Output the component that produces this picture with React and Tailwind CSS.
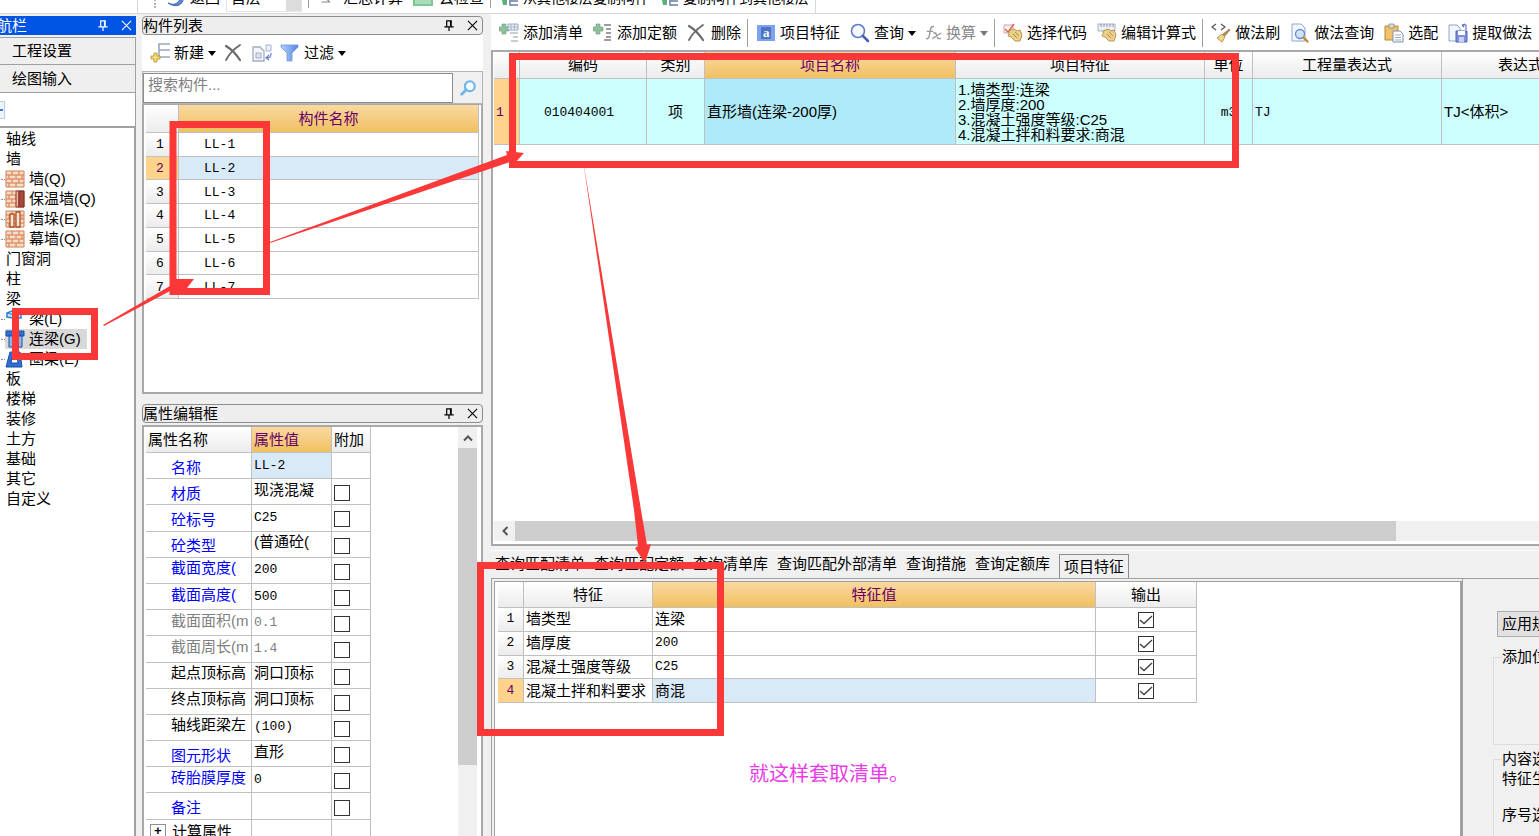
import { useState } from "react";

const tree = [
  { label: "轴线" },
  { label: "墙" },
  { label: "墙(Q)", icon: "brick" },
  { label: "保温墙(Q)", icon: "insulated" },
  { label: "墙垛(E)", icon: "pier" },
  { label: "幕墙(Q)", icon: "brick" },
  { label: "门窗洞" },
  { label: "柱" },
  { label: "梁" },
  { label: "梁(L)", icon: "beam" },
  { label: "连梁(G)", icon: "coupling", active: true },
  { label: "圈梁(E)", icon: "ring" },
  { label: "板" },
  { label: "楼梯" },
  { label: "装修" },
  { label: "土方" },
  { label: "基础" },
  { label: "其它" },
  { label: "自定义" },
];

const components = ["LL-1", "LL-2", "LL-3", "LL-4", "LL-5", "LL-6", "LL-7"];

const properties = [
  { name: "名称", value: "LL-2", tone: "blue", mono: true, noCheck: true, active: true },
  { name: "材质", value: "现浇混凝", tone: "blue" },
  { name: "砼标号", value: "C25", tone: "blue", mono: true },
  { name: "砼类型", value: "(普通砼(", tone: "blue" },
  { name: "截面宽度(", value: "200", tone: "blue", mono: true, wrapped: true },
  { name: "截面高度(", value: "500", tone: "blue", mono: true, wrapped: true },
  { name: "截面面积(m", value: "0.1", tone: "gray", mono: true, wrapped: true },
  { name: "截面周长(m", value: "1.4", tone: "gray", mono: true, wrapped: true },
  { name: "起点顶标高", value: "洞口顶标", tone: "black", wrapped: true },
  { name: "终点顶标高", value: "洞口顶标", tone: "black", wrapped: true },
  { name: "轴线距梁左", value: "(100)", tone: "black", mono: true, wrapped: true },
  { name: "图元形状", value: "直形", tone: "blue" },
  { name: "砖胎膜厚度", value: "0", tone: "blue", mono: true, wrapped: true },
  { name: "备注", value: "", tone: "blue" },
];

const tones = {
  blue: "text-[#0000ff]",
  gray: "text-[#808080]",
  black: "text-black",
};

const features = [
  { name: "墙类型", value: "连梁" },
  { name: "墙厚度", value: "200", mono: true },
  { name: "混凝土强度等级", value: "C25", mono: true },
  { name: "混凝土拌和料要求", value: "商混" },
];

const tabs = [
  "查询匹配清单",
  "查询匹配定额",
  "查询清单库",
  "查询匹配外部清单",
  "查询措施",
  "查询定额库",
  "项目特征",
];

const headGray = "bg-linear-to-b from-white to-[#ececec] font-normal";
const headGold = "bg-linear-to-b from-[#fad9a0] to-[#f0c060] font-normal text-[#660066]";
const cell = "border-r border-b border-[#c0c0c0] overflow-hidden whitespace-nowrap";
const mono = "font-['Liberation_Mono',monospace] text-[13px]";

const Icon = ({ children, className = "w-5 h-5" }) => (
  <svg viewBox="0 0 20 20" fill="none" className={`shrink-0 ${className}`} aria-hidden="true">
    {children}
  </svg>
);

const Caret = ({ className = "text-black" }) => (
  <svg viewBox="0 0 10 6" className={`h-[5px] w-2 shrink-0 ${className}`} aria-hidden="true">
    <path d="M0 0h10L5 6z" fill="currentColor" />
  </svg>
);

const PlusMark = () => (
  <path d="M3 1h4v3h3v4H7v3H3V8H0V4h3z" fill="#8fc09a" stroke="#68a076" strokeWidth="0.6" />
);

const AddListIcon = () => (
  <Icon>
    <PlusMark />
    <path d="M9 1h10v6H9z" fill="#e8eef8" stroke="#9aa8c4" />
    <path d="M9 4h10M12 1v6M15.500 1v6" stroke="#9aa8c4" strokeWidth="0.8" />
    <path d="M11 10h8M14 14h5M12 18h7" stroke="#9a9a9a" />
  </Icon>
);

const AddQuotaIcon = () => (
  <Icon>
    <PlusMark />
    <path d="M11 2h7M13 6h5M13 10h5M13 14h5M11 17h7" stroke="#7d7d7d" strokeWidth="1.3" />
  </Icon>
);

const DeleteIcon = ({ className }) => (
  <Icon className={className}>
    <path d="M2 3c5 3 10 8 14 14" stroke="#6b6b6b" strokeWidth="2.200" strokeLinecap="round" />
    <path d="M16 2C10 6 5 11 2 17" stroke="#6b6b6b" strokeWidth="1.800" strokeLinecap="round" />
  </Icon>
);

const FeatureIcon = () => (
  <Icon>
    <path d="M1 2h18v16H1z" fill="#7ba4ee" />
    <path d="M5 4h10v12H5z" fill="#4f74c4" />
    <text x="7" y="14" fontSize="13" fontWeight="bold" fill="#fff" fontFamily="Liberation Serif">
      a
    </text>
  </Icon>
);

const QueryIcon = () => (
  <Icon>
    <circle cx="8" cy="8" r="6.500" stroke="#6478c8" strokeWidth="1.600" fill="#f4f8ff" />
    <path d="m13 13 5 5" stroke="#4b5db0" strokeWidth="2.600" strokeLinecap="round" />
  </Icon>
);

const FxIcon = () => (
  <Icon className="h-5 w-4">
    <path d="M10 2c-4-1-4 2-5 7s-1 9-5 8M1 8h8" stroke="#9a9a9a" strokeWidth="1.800" />
    <path d="M9 10h3l3 7h4M19 10 8 17" stroke="#9a9a9a" strokeWidth="1.800" />
  </Icon>
);

const Hand = () => (
  <path
    d="M6 8l5-2 3 2 3-1 2 5-2 6h-5l-4-4-3-1 1-2z"
    fill="#ecd08a"
    stroke="#b18f45"
    strokeWidth="0.9"
  />
);

const SelectCodeIcon = () => (
  <Icon>
    <path d="M1 2h9v8H1z" fill="#f6f1f1" stroke="#c9a9a9" />
    <path d="m2 6 3 3 6-8" stroke="#e05a4a" strokeWidth="1.300" />
    <Hand />
    <path d="m10 11 4 4M12 9l4 4" stroke="#b18f45" />
  </Icon>
);

const EditExprIcon = () => (
  <Icon>
    <path d="M1 1h17v7H1z" fill="#eceff6" stroke="#a9b1c6" />
    <path d="M4 1v3M7 1v3M10 1v3M13 1v3M16 1v3" stroke="#8892ad" strokeWidth="0.9" />
    <Hand />
    <path d="m10 11 4 4M12 9l4 4" stroke="#b18f45" />
  </Icon>
);

const BrushIcon = () => (
  <Icon>
    <path d="M5 1 1 4l4 3M10 1l4 3-4 3" stroke="#555" strokeWidth="1.200" />
    <path d="m18 6 1 1-6 7-2-2z" fill="#b98a58" stroke="#8d6436" strokeWidth="0.600" />
    <path d="m11 11 3 3-3 5-5-4z" fill="#f0d98c" stroke="#b18f45" strokeWidth="0.900" />
  </Icon>
);

const MethodQueryIcon = () => (
  <Icon>
    <path d="M2 1h9l4 4v13H2z" fill="#f2f6fd" stroke="#8fa6cf" />
    <circle cx="10" cy="11" r="4.500" fill="#cfe2f8" stroke="#6a8fc8" strokeWidth="1.300" />
    <path d="m13.500 14.500 4 4" stroke="#c08b3e" strokeWidth="2.400" strokeLinecap="round" />
  </Icon>
);

const PasteIcon = () => (
  <Icon>
    <path d="M1 3h13v14H1z" fill="#eec36a" stroke="#b5893a" />
    <path d="M5 1h5v4H5z" fill="#d9d9d9" stroke="#8a8a8a" strokeWidth="0.800" />
    <path d="M9 8h7l3 3v8H9z" fill="#fff" stroke="#7d8eae" />
    <path d="M11 12h6M11 14.500h6M11 17h6" stroke="#9aabc9" />
  </Icon>
);

const ExtractIcon = () => (
  <Icon>
    <path d="M1 2h8l3 3v13H1z" fill="#f3f7fd" stroke="#8fa6cf" />
    <path d="M14 2h4v5M14 2l3-1M14 2l2 2" stroke="#5577b8" strokeWidth="1.100" />
    <path d="M8 8h11v11H8z" fill="#7f8fe0" stroke="#5060b8" />
    <path d="M10 8h7v4h-7z" fill="#fff" />
    <path d="M11 14h5v5h-5z" fill="#c8cff3" />
  </Icon>
);

const NewIcon = () => (
  <Icon>
    <path d="M8 1h12M9 1v13M9 7h11M9 14h11" stroke="#9aa9bd" strokeWidth="1.600" />
    <path
      d="M4 10h3v3h3v3H7v3H4v-3H1v-3h3z"
      fill="#f5dc6e"
      stroke="#a98f2d"
      strokeWidth="0.800"
    />
  </Icon>
);

const CopyLayerIcon = () => (
  <Icon>
    <path d="M1 4h7l4 4v10H1z" fill="#f3f5fa" stroke="#a3acc0" strokeWidth="1.300" />
    <path d="M4 10h5v5H4z" fill="#dde2ee" stroke="#a3acc0" />
    <path d="M14 2h5v6h-5z" fill="#eef2fb" stroke="#a3b0d4" />
    <path d="M19 10c0 4-1 5-4 5m2-3-3 3 3 2" stroke="#6b7fd6" strokeWidth="1.300" />
  </Icon>
);

const FilterIcon = () => (
  <Icon>
    <defs>
      <linearGradient id="funnel" x1="0" x2="1">
        <stop offset="0" stopColor="#b4d2ff" />
        <stop offset="1" stopColor="#5a86e0" />
      </linearGradient>
    </defs>
    <path d="M1 2h17v2l-6 6v8H7v-8L1 4z" fill="url(#funnel)" stroke="#6f93e2" strokeWidth="0.800" />
  </Icon>
);

const PinIcon = () => (
  <svg viewBox="0 0 12 14" className="h-[13px] w-3" fill="none" aria-hidden="true">
    <path d="M3.500 2v6M3 2h6M1 8.500h10M6 9v4" stroke="currentColor" strokeWidth="1.300" />
    <path d="M8 2v6" stroke="currentColor" strokeWidth="2" />
  </svg>
);

const CloseIcon = () => (
  <svg viewBox="0 0 12 12" className="h-[11px] w-[11px]" fill="none" aria-hidden="true">
    <path d="m1 1 10 10M11 1 1 11" stroke="currentColor" strokeWidth="1.200" />
  </svg>
);

const TreeIcon = ({ type }) => {
  if (type === "brick" || type === "insulated" || type === "pier") {
    return (
      <Icon>
        <path d="M1 2h18v16H1z" fill="#f9dcc4" stroke="#c98058" />
        <path
          d="M1 6h18M1 10h18M1 14h18M7 2v4M14 2v4M4 6v4M11 6v4M17 6v4M7 10v4M14 10v4M4 14v4M11 14v4"
          stroke="#d4794c"
        />
        {type === "insulated" && (
          <>
            <path d="M11 2h3v16h-3z" fill="#e9b39c" stroke="#9b3b2c" />
            <path d="M14 2h5v16h-5z" fill="#a8493a" stroke="#7d2c20" />
          </>
        )}
        {type === "pier" && (
          <path d="M5 5h4v13H5zM11 3h4v15h-4z" fill="#fbe6d6" stroke="#b04f22" strokeWidth="1.300" />
        )}
      </Icon>
    );
  }
  if (type === "beam") {
    return (
      <Icon>
        <path d="M2 4l5-2 9 2v5h-3v8l-5 1V9L2 8z" fill="#d4eafd" stroke="#2b85d8" strokeWidth="1.600" />
        <path d="M2 4l7 2v12M9 6l7-2" stroke="#2b85d8" strokeWidth="1.200" />
      </Icon>
    );
  }
  if (type === "coupling") {
    return (
      <Icon>
        <path d="M1 2h18v5H1z" fill="#2f6fd0" stroke="#1b4fa8" />
        <path d="M4 7h4v11H4zM13 7h4v11h-4z" fill="#8fb6ee" stroke="#1b4fa8" />
      </Icon>
    );
  }
  return (
    <Icon>
      <path d="M5 3h10l2 15H1z" fill="#2f6fd0" stroke="#1b4fa8" />
      <path d="M8 5h4l1 9H6z" fill="#fff" stroke="#1b4fa8" />
    </Icon>
  );
};

const ToolButton = ({ icon, children, caret, muted }) => (
  <button
    type="button"
    className={`flex shrink-0 items-center gap-1 whitespace-nowrap ${muted ? "text-[#8a8a8a]" : "text-black"}`}
  >
    {icon}
    {children}
    {caret && <Caret className={muted ? "text-[#777777]" : "text-black"} />}
  </button>
);

const PanelHeader = ({ title }) => (
  <div className="flex h-[19px] shrink-0 items-center justify-between rounded-sm border border-[#8c8c8c] bg-[#eeeeee] pr-1">
    <h2 className="leading-4">{title}</h2>
    <div className="flex items-center gap-3">
      <button type="button" aria-label="固定">
        <PinIcon />
      </button>
      <button type="button" aria-label="关闭">
        <CloseIcon />
      </button>
    </div>
  </div>
);

const CheckBox = ({ label, defaultChecked }) => (
  <span className="inline-grid h-4 w-4 align-middle">
    <input
      type="checkbox"
      aria-label={label}
      defaultChecked={defaultChecked}
      className="peer col-start-1 row-start-1 h-4 w-4 appearance-none border border-[#333333] bg-white"
    />
    <svg
      viewBox="0 0 16 16"
      fill="none"
      className="pointer-events-none invisible col-start-1 row-start-1 h-4 w-4 peer-checked:visible"
      aria-hidden="true"
    >
      <path d="m2 8 4 3.500L14 4" stroke="#444" strokeWidth="1.400" />
    </svg>
  </span>
);

const TopStrip = () => (
  <header className="flex h-3.5 shrink-0 items-end overflow-hidden border-b border-[#d8d8d8] bg-white pl-[137px]">
    <div className="flex h-[30px] shrink-0 items-center gap-1.5 border-x border-[#d8d8d8] pr-1.5 pl-4 whitespace-nowrap">
      <span className="mr-1 h-5 border-l-2 border-dotted border-[#b0b0b0]" />
      <button type="button" className="flex items-center gap-1">
        <Icon>
          <path d="M2 15c8 4 14-2 13-12 6 8 0 20-13 12z" fill="#5f86d8" stroke="#3e62b0" />
        </Icon>
        返回
      </button>
      <select
        aria-label="楼层"
        className="h-7 w-[76px] appearance-none border border-[#e4e4e4] bg-linear-to-r from-white from-80% to-[#dcdcdc] to-80% pl-1"
      >
        <option>首层</option>
      </select>
      <button type="button" className="flex items-center gap-2 border-l border-[#a0a0a0] pl-2.5">
        <Icon className="h-5 w-4">
          <path d="M4 4h8L8 9l5 6H3" stroke="#888" strokeWidth="1.500" />
        </Icon>
        汇总计算
      </button>
      <button type="button" className="flex items-center gap-1.5 pl-1">
        <Icon>
          <path d="M1 4h18v13H1z" fill="#a9dcb8" stroke="#7cc795" strokeWidth="2" />
        </Icon>
        云检查
      </button>
      <button type="button" className="flex items-center gap-1 border-l border-[#a0a0a0] pl-2 text-sm">
        <Icon>
          <path d="M2 8h6v9H4z" fill="#5fb07a" />
          <path d="M11 4v13h8M11 13h8M11 9h8" stroke="#6c7da8" strokeWidth="1.500" />
        </Icon>
        从其他楼层复制构件
      </button>
      <button type="button" className="flex items-center gap-1 pl-1 text-sm">
        <Icon>
          <path d="M2 8h6v9H4z" fill="#5fb07a" />
          <path d="M11 4v13h8M11 13h8M11 9h8" stroke="#6c7da8" strokeWidth="1.500" />
        </Icon>
        复制构件到其他楼层
      </button>
    </div>
  </header>
);

const Sidebar = () => (
  <nav className="flex w-[136px] shrink-0 flex-col pt-0.5">
    <div className="flex h-[19px] shrink-0 items-center justify-between bg-[#0054e3] pr-1 text-white">
      <h2 className="flex w-[27px] justify-end overflow-hidden leading-4 whitespace-nowrap">航栏</h2>
      <div className="flex items-center gap-3">
        <button type="button" aria-label="固定">
          <PinIcon />
        </button>
        <button type="button" aria-label="关闭">
          <CloseIcon />
        </button>
      </div>
    </div>
    <button
      type="button"
      className="mt-0.5 h-7 shrink-0 border-y border-r border-[#a0a0a0] bg-[#efefef] pl-3 text-left"
    >
      工程设置
    </button>
    <button
      type="button"
      className="h-7 shrink-0 border-r border-b border-[#a0a0a0] bg-[#efefef] pl-3 text-left"
    >
      绘图输入
    </button>
    <div className="flex h-[33px] shrink-0 items-center border-r border-[#a0a0a0] bg-white">
      <div className="flex h-[18px] w-[5px] items-center border border-l-0 border-[#b8ccf0] bg-[#eef4ff]">
        <span className="h-0.5 w-[3px] bg-[#3f7fc8]" />
      </div>
    </div>
    <ul className="flex-1 overflow-hidden border-t-2 border-r-2 border-[#a0a0a4] bg-white pt-px">
      {tree.map((item) => (
        <li
          key={item.label}
          className={`flex h-5 items-center whitespace-nowrap ${item.icon ? "pl-px" : "pl-1.5"}`}
        >
          {item.icon ? (
            <>
              <span className="w-1 shrink-0 border-t border-dotted border-[#909090]" />
              <span className={`flex items-center gap-1 pr-1.5 ${item.active ? "bg-[#d9d9d9]" : ""}`}>
                <TreeIcon type={item.icon} />
                {item.label}
              </span>
            </>
          ) : (
            item.label
          )}
        </li>
      ))}
    </ul>
  </nav>
);

const ComponentPanel = () => (
  <section className="flex h-[378px] shrink-0 flex-col">
    <PanelHeader title="构件列表" />
    <div className="flex h-9 shrink-0 items-center gap-2 bg-white pl-2">
      <ToolButton icon={<NewIcon />} caret>
        新建
      </ToolButton>
      <button type="button" aria-label="删除">
        <DeleteIcon />
      </button>
      <button type="button" aria-label="复制">
        <CopyLayerIcon />
      </button>
      <ToolButton icon={<FilterIcon />} caret>
        过滤
      </ToolButton>
    </div>
    <div className="flex h-[33px] shrink-0 items-center border border-[#b4b4b4] bg-[#f0f0f0]">
      <input
        type="text"
        aria-label="搜索构件"
        placeholder="搜索构件..."
        className="h-[30px] min-w-0 flex-1 border border-[#8c8c8c] bg-white px-1 pb-1.5 placeholder:text-[#808080]"
      />
      <button type="button" aria-label="搜索" className="flex w-[29px] justify-center">
        <Icon className="h-[18px] w-[18px]">
          <circle cx="12" cy="8" r="5.500" stroke="#6cb4ea" strokeWidth="2.400" fill="#f2faff" />
          <path d="m8 12-5 5" stroke="#6cb4ea" strokeWidth="3" strokeLinecap="round" />
        </Icon>
      </button>
    </div>
    <div className="min-h-0 flex-1 border-2 border-t border-[#a8a8a8] bg-white pr-0.5 pl-0.5">
      <table className="h-[194px] w-full table-fixed border-separate border-spacing-0">
        <colgroup>
          <col className="w-[33px]" />
          <col />
        </colgroup>
        <thead>
          <tr className="h-7">
            <th className={`${cell} ${headGray}`} />
            <th className={`${cell} ${headGold}`}>构件名称</th>
          </tr>
        </thead>
        <tbody>
          {components.map((name, i) => (
            <tr key={name}>
              <td
                className={`${cell} ${mono} pt-0.5 pr-1 text-center ${i === 1 ? "bg-[#ffd38c] text-[#660066]" : headGray}`}
              >
                {i + 1}
              </td>
              <td className={`${cell} ${mono} pt-0.5 pl-[25px] ${i === 1 ? "bg-[#d8e9f8]" : ""}`}>{name}</td>
            </tr>
          ))}
        </tbody>
      </table>
    </div>
  </section>
);

const PropertyPanel = () => (
  <section className="mt-2.5 flex min-h-0 flex-1 flex-col">
    <PanelHeader title="属性编辑框" />
    <div className="mt-0.5 flex min-h-0 flex-1 justify-between overflow-hidden border-2 border-b-0 border-[#a8a8a8] bg-white pr-1 pl-0.5">
      <table className="h-[419px] w-[225px] shrink-0 table-fixed border-separate border-spacing-0">
        <colgroup>
          <col className="w-[106px]" />
          <col className="w-20" />
          <col className="w-[39px]" />
        </colgroup>
        <thead>
          <tr className="h-[26px]">
            <th className={`${cell} ${headGray} pl-0.5 text-left`}>属性名称</th>
            <th className={`${cell} ${headGold} pl-0.5 text-left`}>属性值</th>
            <th className={`${cell} ${headGray} pl-0.5 text-left`}>附加</th>
          </tr>
        </thead>
        <tbody>
          {properties.map((row) => (
            <tr key={row.name} className="h-[26px]">
              <td
                className={`${cell} pl-[25px] leading-5 ${tones[row.tone]} ${row.wrapped ? "pb-1" : "pt-1"}`}
              >
                {row.name}
              </td>
              <td
                className={`${cell} pl-0.5 leading-5 ${row.mono ? mono : "pb-1"} ${row.active ? "bg-[#d8e9f8]" : ""} ${row.tone === "gray" ? "text-[#808080]" : "text-black"}`}
              >
                {row.value}
              </td>
              <td className={`${cell} pt-0.5 pl-0.5 leading-4`}>
                {!row.noCheck && <CheckBox label={`附加 ${row.name}`} />}
              </td>
            </tr>
          ))}
          <tr className="h-[26px]">
            <td className={`${cell} pl-1 leading-5`}>
              <span className="flex items-center gap-1.5">
                <button
                  type="button"
                  aria-label="展开"
                  className={`${mono} h-4 w-4 border border-[#909090] leading-3 font-bold`}
                >
                  +
                </button>
                计算属性
              </span>
            </td>
            <td className={cell} />
            <td className={cell} />
          </tr>
        </tbody>
      </table>
      <div className="flex w-[19px] flex-col bg-[#f0f0f0]">
        <button type="button" aria-label="向上滚动" className="flex h-[21px] shrink-0 items-center justify-center">
          <svg viewBox="0 0 10 7" className="h-2 w-2.5" fill="none" aria-hidden="true">
            <path d="m1 6 4-4 4 4" stroke="#555" strokeWidth="2" />
          </svg>
        </button>
        <div className="h-[317px] bg-[#cdcdcd]" />
      </div>
    </div>
  </section>
);

const Toolbar = () => (
  <div className="flex h-9 shrink-0 items-center gap-1.5 overflow-hidden bg-white pt-0.5 pl-2">
    <div className="flex shrink-0 items-center gap-2.5">
      <ToolButton icon={<AddListIcon />}>添加清单</ToolButton>
      <ToolButton icon={<AddQuotaIcon />}>添加定额</ToolButton>
      <ToolButton icon={<DeleteIcon />}>删除</ToolButton>
    </div>
    <div className="flex h-7 shrink-0 items-center gap-2.5 border-l border-[#a0a0a0] pl-2">
      <ToolButton icon={<FeatureIcon />}>项目特征</ToolButton>
      <ToolButton icon={<QueryIcon />} caret>
        查询
      </ToolButton>
      <ToolButton icon={<FxIcon />} caret muted>
        换算
      </ToolButton>
    </div>
    <div className="flex h-7 shrink-0 items-center gap-2.5 border-l border-[#a0a0a0] pl-2">
      <ToolButton icon={<SelectCodeIcon />}>选择代码</ToolButton>
      <ToolButton icon={<EditExprIcon />}>编辑计算式</ToolButton>
    </div>
    <div className="flex h-7 shrink-0 items-center gap-2.5 border-l border-[#a0a0a0] pl-2">
      <ToolButton icon={<BrushIcon />}>做法刷</ToolButton>
      <ToolButton icon={<MethodQueryIcon />}>做法查询</ToolButton>
      <ToolButton icon={<PasteIcon />}>选配</ToolButton>
      <ToolButton icon={<ExtractIcon />}>提取做法</ToolButton>
    </div>
  </div>
);

const BillGrid = () => (
  <div className="flex h-[496px] shrink-0 flex-col overflow-hidden border-y-2 border-l-2 border-[#a8a8a8] bg-white pb-[3px] pl-px">
    <table className="w-[1136px] table-fixed border-separate border-spacing-0">
      <colgroup>
        <col className="w-[26px]" />
        <col className="w-[127px]" />
        <col className="w-[58px]" />
        <col className="w-[251px]" />
        <col className="w-[249px]" />
        <col className="w-12" />
        <col className="w-[189px]" />
        <col className="w-[188px]" />
      </colgroup>
      <thead>
        <tr className="h-[27px]">
          <th className={`${cell} ${headGray}`} />
          <th className={`${cell} ${headGray}`}>编码</th>
          <th className={`${cell} ${headGray}`}>类别</th>
          <th className={`${cell} ${headGold}`}>项目名称</th>
          <th className={`${cell} ${headGray}`}>项目特征</th>
          <th className={`${cell} ${headGray}`}>单位</th>
          <th className={`${cell} ${headGray}`}>工程量表达式</th>
          <th className={`${cell} ${headGray}`}>表达式说明</th>
        </tr>
      </thead>
      <tbody>
        <tr className="h-[66px] bg-[#ccffff]">
          <td className={`${cell} ${mono} bg-[#ffd38c] pt-0.5 pl-0.5 text-[#660066]`}>1</td>
          <td className={`${cell} ${mono} pt-0.5 pr-2 text-center`}>010404001</td>
          <td className={`${cell} text-center`}>项</td>
          <td className={`${cell} bg-[#aeeaf8] pl-0.5`}>直形墙(连梁-200厚)</td>
          <td className={`${cell} pl-0.5 leading-[15px]`}>
            1.墙类型:连梁
            <br />
            2.墙厚度:200
            <br />
            3.混凝土强度等级:C25
            <br />
            4.混凝土拌和料要求:商混
          </td>
          <td className={`${cell} ${mono} pt-0.5 text-center`}>m3</td>
          <td className={`${cell} ${mono} pt-0.5 pl-0.5`}>TJ</td>
          <td className={`${cell} pl-0.5`}>{"TJ<体积>"}</td>
        </tr>
      </tbody>
    </table>
    <div className="mt-auto flex h-5 bg-[#f0f0f0]">
      <button type="button" aria-label="向左滚动" className="flex w-[21px] shrink-0 items-center justify-center">
        <svg viewBox="0 0 7 10" className="h-2.5 w-2" fill="none" aria-hidden="true">
          <path d="M6 1 2 5l4 4" stroke="#555" strokeWidth="2" />
        </svg>
      </button>
      <div className="flex-1">
        <div className="h-full w-[86%] bg-[#cdcdcd]" />
      </div>
    </div>
  </div>
);

const FeatureTable = () => (
  <table className="h-[121px] w-[699px] table-fixed border-separate border-spacing-0">
    <colgroup>
      <col className="w-[26px]" />
      <col className="w-[129px]" />
      <col className="w-[443px]" />
      <col className="w-[101px]" />
    </colgroup>
    <thead>
      <tr className="h-[26px]">
        <th className={`${cell} ${headGray}`} />
        <th className={`${cell} ${headGray}`}>特征</th>
        <th className={`${cell} ${headGold}`}>特征值</th>
        <th className={`${cell} ${headGray}`}>输出</th>
      </tr>
    </thead>
    <tbody>
      {features.map((row, i) => (
        <tr key={row.name}>
          <td className={`${cell} ${mono} text-center ${i === 3 ? "bg-[#ffd38c] text-[#660066]" : headGray}`}>
            {i + 1}
          </td>
          <td className={`${cell} pl-0.5 leading-5`}>{row.name}</td>
          <td className={`${cell} pl-0.5 leading-5 ${row.mono ? mono : ""} ${i === 3 ? "bg-[#d8e9f8]" : ""}`}>
            {row.value}
          </td>
          <td className={`${cell} text-center leading-4`}>
            <CheckBox label={`输出 ${row.name}`} defaultChecked />
          </td>
        </tr>
      ))}
    </tbody>
  </table>
);

const QueryPanel = () => {
  const [active, setActive] = useState("项目特征");

  return (
    <section className="mt-1 flex min-h-0 flex-1 flex-col border-t border-white">
      <div className="flex h-7 shrink-0 items-end border-b border-[#a0a0a0] pl-1">
        {tabs.map((tab) => (
          <button
            key={tab}
            type="button"
            onClick={() => setActive(tab)}
            className={
              tab === active
                ? "h-6 shrink-0 border border-b-0 border-[#8c8c8c] px-1 whitespace-nowrap"
                : "mr-[9px] h-[29px] shrink-0 whitespace-nowrap"
            }
          >
            {tab}
          </button>
        ))}
      </div>
      <div className="flex min-h-0 flex-1 overflow-hidden">
        <div className="min-w-0 flex-1 border-x border-[#a0a0a0] pt-0.5 pl-0.5">
          <div className="h-full overflow-hidden border-t border-r-2 border-l border-[#a0a0a4] bg-white pl-[3px]">
            <FeatureTable />
            <p className="pt-[57px] pl-[251px] text-xl text-[#e83ce8]">就这样套取清单。</p>
          </div>
        </div>
        <aside className="w-[76px] shrink-0 overflow-hidden whitespace-nowrap">
          <div className="w-40 pt-8 pl-[30px]">
            <button type="button" className="ml-1 h-[26px] border border-[#adadad] bg-[#e1e1e1] px-1">
              应用规则
            </button>
            <fieldset className="mt-2.5 h-[98px] border border-[#dcdcdc] pl-2">
              <legend className="leading-5">添加位置</legend>
            </fieldset>
            <fieldset className="mt-1 h-[140px] border border-[#dcdcdc] pl-2">
              <legend className="leading-5">内容选项</legend>
              <p className="leading-5">特征生成</p>
              <p className="mt-4 leading-5">序号选项</p>
            </fieldset>
          </div>
        </aside>
      </div>
    </section>
  );
};

// red marker boxes and arrows laid over the whole window
const Annotations = () => (
  <svg className="pointer-events-none absolute top-0 left-0 h-[836px] w-[1539px]" aria-hidden="true">
    <g fill="none" stroke="#fb3838" strokeWidth="7">
      <rect x="15.500" y="311.500" width="79" height="45" />
      <rect x="173" y="124.500" width="93.500" height="167" />
      <rect x="512.500" y="56.500" width="723" height="108" />
      <rect x="480.500" y="565.500" width="240" height="167" />
    </g>
    <g fill="#fb3838">
      <path d="M103 325 170 286 173 279h21l-7 9-10 4-7-1-66 35z" />
      <path d="M270 242 507 155l-1-4 18 2-10 11-4-2-240 81z" />
      <path d="M583 160 634 510l4 36-3 2 10 15 6-19-4 1-6-35z" />
    </g>
  </svg>
);

const App = () => {
  return (
    <main className="relative flex h-screen flex-col overflow-hidden bg-[#f0f0f0] font-['Liberation_Sans','Noto_Sans_CJK_SC',sans-serif] text-[15px] leading-5 text-black">
      <TopStrip />
      <div className="flex min-h-0 flex-1">
        <Sidebar />
        <div className="ml-1.5 flex w-[341px] shrink-0 flex-col pt-0.5">
          <ComponentPanel />
          <PropertyPanel />
        </div>
        <div className="ml-2 flex min-w-0 flex-1 flex-col">
          <Toolbar />
          <BillGrid />
          <QueryPanel />
        </div>
      </div>
      <Annotations />
    </main>
  );
};

export default App;
